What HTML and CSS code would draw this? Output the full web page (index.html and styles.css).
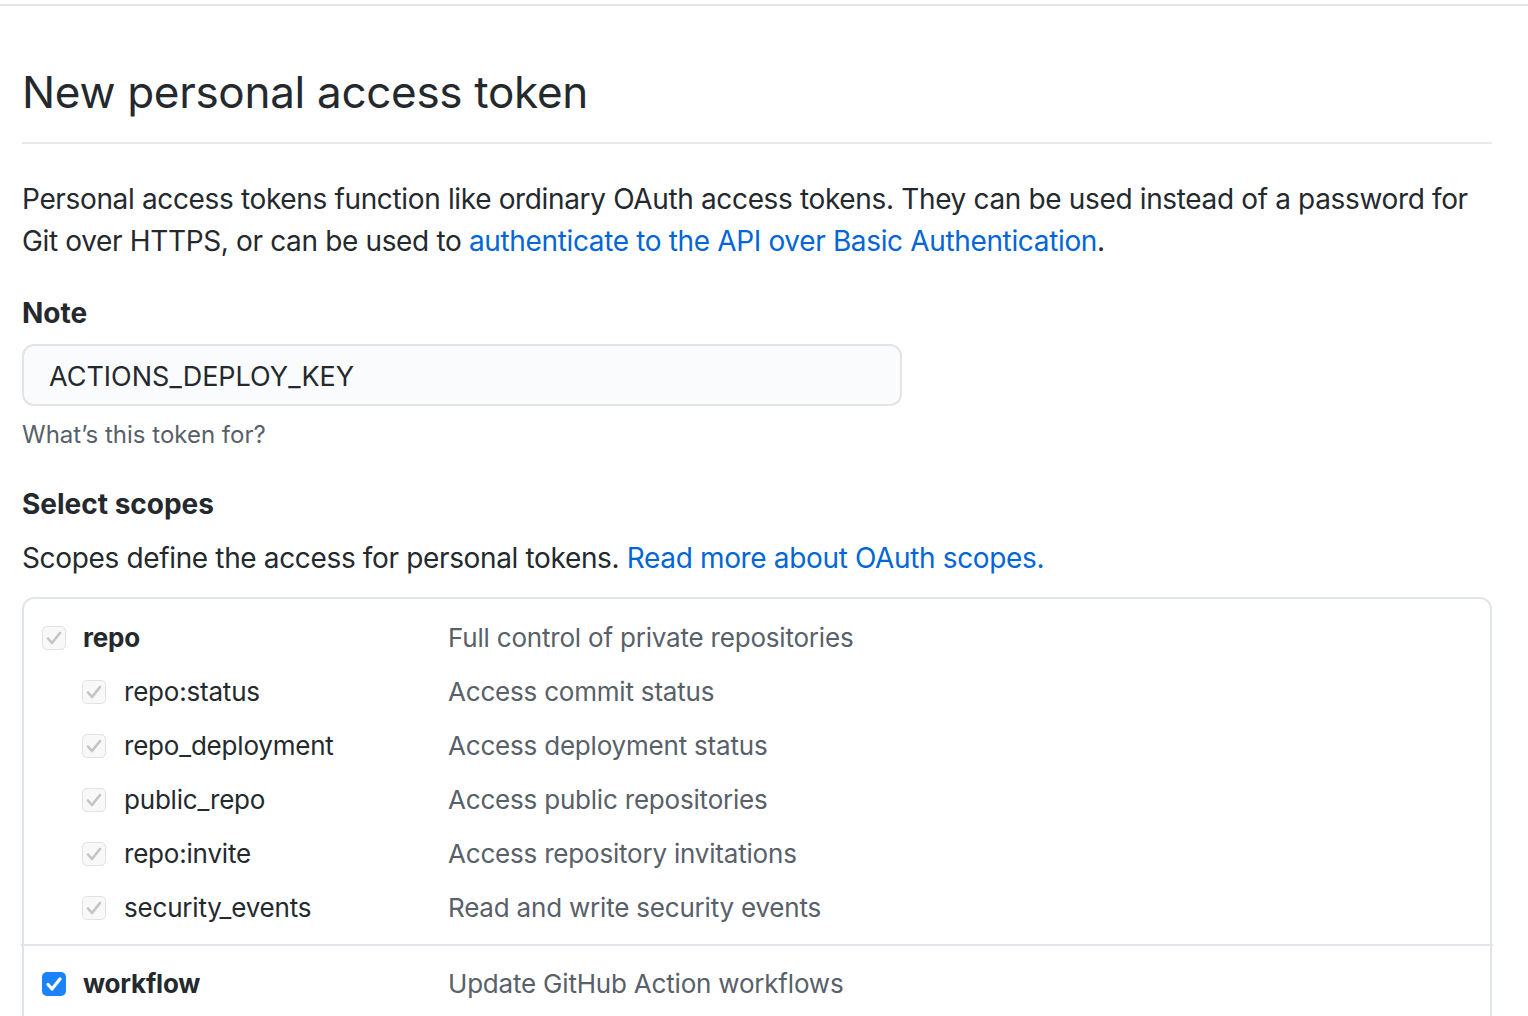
FILE: index.html
```html
<!DOCTYPE html>
<html lang="en">
<head>
<meta charset="utf-8">
<title>New personal access token</title>
<link rel="stylesheet" href="styles.css">
</head>
<body>
<div class="topline"></div>
<main class="page">
  <div class="subhead">
    <h1 class="subhead-heading">New personal access token</h1>
  </div>
  <p class="intro">Personal access tokens function like ordinary OAuth access tokens. They can be used instead of a password for Git over HTTPS, or can be used to <a href="#">authenticate to the API over Basic Authentication</a>.</p>

  <div class="form-group">
    <label class="label">Note</label>
    <div class="input">ACTIONS_DEPLOY_KEY</div>
    <p class="note">What’s this token for?</p>
  </div>

  <h3 class="label scopes-title">Select scopes</h3>
  <p class="scopes-desc">Scopes define the access for personal tokens. <a href="#">Read more about OAuth scopes.</a></p>

  <div class="scopes">
    <div class="group">
      <div class="row">
        <div class="name main"><span class="cb disabled"><svg viewBox="0 0 24 24"><path d="M6 12.5l4 4.5 8-10"/></svg></span><span class="scope-label">repo</span></div>
        <div class="desc">Full control of private repositories</div>
      </div>
      <div class="row">
        <div class="name sub"><span class="cb disabled"><svg viewBox="0 0 24 24"><path d="M6 12.5l4 4.5 8-10"/></svg></span><span>repo:status</span></div>
        <div class="desc">Access commit status</div>
      </div>
      <div class="row">
        <div class="name sub"><span class="cb disabled"><svg viewBox="0 0 24 24"><path d="M6 12.5l4 4.5 8-10"/></svg></span><span>repo_deployment</span></div>
        <div class="desc">Access deployment status</div>
      </div>
      <div class="row">
        <div class="name sub"><span class="cb disabled"><svg viewBox="0 0 24 24"><path d="M6 12.5l4 4.5 8-10"/></svg></span><span>public_repo</span></div>
        <div class="desc">Access public repositories</div>
      </div>
      <div class="row">
        <div class="name sub"><span class="cb disabled"><svg viewBox="0 0 24 24"><path d="M6 12.5l4 4.5 8-10"/></svg></span><span>repo:invite</span></div>
        <div class="desc">Access repository invitations</div>
      </div>
      <div class="row">
        <div class="name sub"><span class="cb disabled"><svg viewBox="0 0 24 24"><path d="M6 12.5l4 4.5 8-10"/></svg></span><span>security_events</span></div>
        <div class="desc">Read and write security events</div>
      </div>
    </div>
    <div class="divider"></div>
    <div class="group">
      <div class="row">
        <div class="name main"><span class="cb checked"><svg viewBox="0 0 24 24"><path d="M6 12.5l4 4.5 8-10"/></svg></span><span class="scope-label">workflow</span></div>
        <div class="desc">Update GitHub Action workflows</div>
      </div>
    </div>
  </div>
</main>
</body>
</html>
```
FILE: styles.css
```css
* { box-sizing: border-box; }
html, body { margin: 0; padding: 0; background: #fff; }
body {
  font-family: Inter, "Noto Sans", "Liberation Sans", sans-serif;
  color: #24292e;
  font-size: 28px;
  line-height: 42px;
  letter-spacing: -0.35px;
  overflow: hidden;
}
a { color: #0366d6; text-decoration: none; }

.topline {
  margin-top: 4px;
  height: 2px;
  background: #e1e4e8;
}

.page {
  padding: 0 36px 0 22px;
}

.subhead {
  padding-top: 50px;
  padding-bottom: 14px;
  border-bottom: 2px solid #e8e9ec;
}
.subhead-heading {
  margin: 0;
  font-size: 44px;
  font-weight: 400;
  line-height: 72px;
  letter-spacing: -0.3px;
}

.intro {
  margin: 34px 0 30px;
}

.form-group { margin: 0; }
.label {
  display: block;
  margin: 0;
  font-size: 28px;
  font-weight: 700;
  line-height: 42px;
  letter-spacing: 0;
}
.input {
  margin-top: 10px;
  width: 880px;
  height: 62px;
  border: 2px solid #e1e4e8;
  border-radius: 12px;
  background: #fafbfc;
  padding: 3px 25px 0;
  display: flex;
  align-items: center;
  font-size: 27px;
  letter-spacing: 0;
}
.note {
  margin: 11px 0 0;
  font-size: 24px;
  line-height: 36px;
  letter-spacing: 0;
  color: #586069;
}

.scopes-title { margin-top: 30px; }
.scopes-desc { margin: 12px 0 18px; }

.scopes {
  border: 2px solid #e1e4e8;
  border-radius: 12px;
  padding: 12px 0 40px;
  font-size: 26px;
  letter-spacing: -0.2px;
}
.row {
  display: grid;
  grid-template-columns: 406px 1fr;
  height: 54px;
  align-items: center;
  padding-left: 18px;
}
.group:last-child { padding-top: 11px; }
.divider {
  height: 2px;
  background: #e1e4e8;
  margin: 9px -3px 0;
}
.name {
  display: flex;
  align-items: center;
  gap: 17px;
}
.name.sub { padding-left: 40px; gap: 18px; }
.scope-label { font-weight: 700; }
.desc { color: #586069; }

.cb {
  width: 24px;
  height: 24px;
  border-radius: 5px;
  display: inline-flex;
  flex: none;
}
.cb svg { width: 24px; height: 24px; }
.cb path {
  fill: none;
  stroke-width: 2.6;
  stroke-linecap: round;
  stroke-linejoin: round;
}
.cb.disabled {
  background: #f8f8f8;
  border: 1.5px solid #e2e2e2;
}
.cb.disabled svg { margin: -1.5px; }
.cb.disabled path { stroke: #c4c4c4; }
.cb.checked {
  background: #1a82fb;
}
.cb.checked path { stroke: #fff; stroke-width: 3.2; }
```
